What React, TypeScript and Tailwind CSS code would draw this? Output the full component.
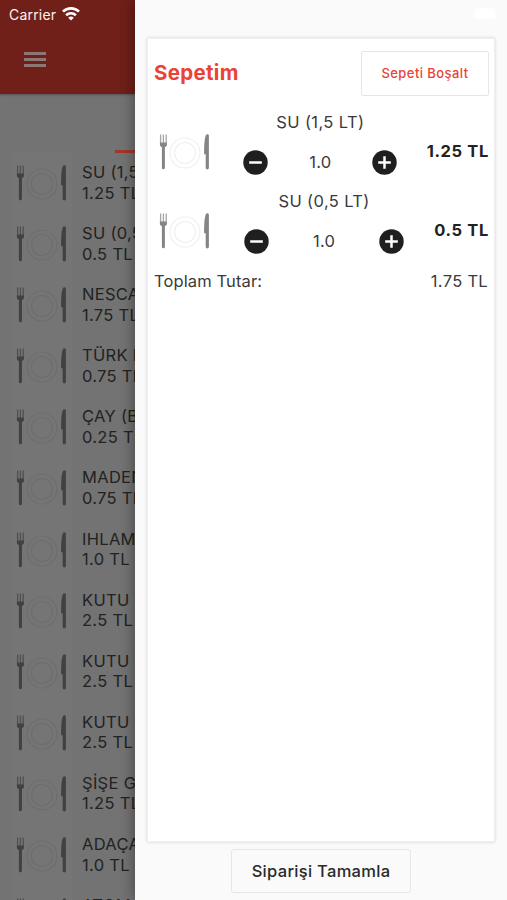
interface Product {
  name: string;
  price: string;
}

interface CartLine {
  name: string;
  quantity: string;
  price: string;
  controls: string;
  details: string;
}

const products: Product[] = [
  { name: 'SU (1,5 LT)', price: '1.25 TL' },
  { name: 'SU (0,5 LT)', price: '0.5 TL' },
  { name: 'NESCAFE', price: '1.75 TL' },
  { name: 'TÜRK KAHVESİ', price: '0.75 TL' },
  { name: 'ÇAY (BARDAK)', price: '0.25 TL' },
  { name: 'MADEN SUYU', price: '0.75 TL' },
  { name: 'IHLAMUR', price: '1.0 TL' },
  { name: 'KUTU KOLA', price: '2.5 TL' },
  { name: 'KUTU FANTA', price: '2.5 TL' },
  { name: 'KUTU SPRITE', price: '2.5 TL' },
  { name: 'ŞİŞE GAZOZ', price: '1.25 TL' },
  { name: 'ADAÇAYI', price: '1.0 TL' },
  { name: 'ATOM', price: '2.5 TL' },
];

const cart: CartLine[] = [
  { name: 'SU (1,5 LT)', quantity: '1.0', price: '1.25 TL', controls: 'w-[154px]', details: 'w-[209px]' },
  { name: 'SU (0,5 LT)', quantity: '1.0', price: '0.5 TL', controls: 'w-[160px]', details: 'w-[218px]' },
];

function PlateImage({ dimmed = false }: { dimmed?: boolean }) {
  const metal = dimmed ? '#414141' : '#858585';
  const tines = dimmed ? '#505050' : '#a5a5a5';
  const ring = dimmed ? '#6e6e6e' : '#f0f0f0';

  return (
    <svg viewBox="0 0 60 60" className="size-[60px] shrink-0" fill="none">
      <path d="M5.6 11.5v9M8.4 11.5v9M11.2 11.5v9" stroke={tines} strokeWidth="1.3" />
      <path d="M4.9 19.5h7v2.2c0 1.3-1 2.1-2 2.4v20.7a1.5 1.5 0 0 1-3 0V24.1c-1-.3-2-1.1-2-2.4z" fill={metal} />
      <circle cx="30" cy="30" r="15" stroke={ring} strokeWidth="1.2" />
      <circle cx="30" cy="30" r="10.5" stroke={ring} strokeWidth="1.2" />
      <path d="M53.9 13v31.8a1.6 1.6 0 0 1-3.2 0V31.3h-1.6c0-7 .2-14.5 1.4-18 .6-2.6 3.4-2.6 3.4-.3z" fill={metal} />
    </svg>
  );
}

function RoundButton({ type }: { type: 'minus' | 'plus' }) {
  return (
    <button className="size-[25px]">
      <svg viewBox="0 0 25 25" className="size-[25px]">
        <circle cx="12.5" cy="12.5" r="12.2" fill="#1f1f1f" />
        <path d={type === 'plus' ? 'M6.2 12.5h12.6M12.5 6.2v12.6' : 'M6.2 12.5h12.6'} stroke="#fff" strokeWidth="2.5" />
      </svg>
    </button>
  );
}

function WifiIcon() {
  return (
    <svg viewBox="0 0 18 14" className="h-[14px] w-[18px]" fill="none" stroke="#fff" strokeWidth="2.6">
      <path d="M1 4.7a11.3 11.3 0 0 1 16 0" />
      <path d="M4.1 8.2a7 7 0 0 1 9.8 0" />
      <path d="M9 13.6 6.2 10.8a4 4 0 0 1 5.6 0z" fill="#fff" stroke="none" />
    </svg>
  );
}

function Menu() {
  return (
    <div className="w-[135px] shrink-0 overflow-hidden bg-[#737373]">
      <header className="h-[94px] bg-[#701f19] pl-[9px] pt-[4px] shadow-[0_1px_2px_#555]">
        <div className="flex h-5 items-center gap-[6px]">
          <span className="text-[14px] tracking-[0.2px] text-[#fff3ef]">Carrier</span>
          <WifiIcon />
        </div>
        <div className="ml-[15px] mt-[28px] flex w-[22px] flex-col gap-[3px]">
          <span className="h-[3px] bg-[#8b7774]" />
          <span className="h-[3px] bg-[#8b7774]" />
          <span className="h-[3px] bg-[#8b7774]" />
        </div>
      </header>
      <div className="flex h-[59px] items-end justify-end">
        <span className="h-[3px] w-[20px] bg-[#a5352c]" />
      </div>
      <div className="ml-3 w-[300px]">
        {products.map((product) => (
          <div key={product.name} className="flex h-[61.1px] gap-[10px]">
            <div className="h-full bg-[#757575] pt-px">
              <PlateImage dimmed />
            </div>
            <div className="pt-[9px] text-[16.5px] leading-[20.5px] tracking-[0.3px] text-[#222]">
              <p>{product.name}</p>
              <p>{product.price}</p>
            </div>
          </div>
        ))}
      </div>
    </div>
  );
}

function CartRow({ line }: { line: CartLine }) {
  return (
    <div className="flex h-[79px] justify-between">
      <div className="-mr-px ml-px pt-[12px]">
        <PlateImage />
      </div>
      <div className={`flex flex-col items-center ${line.details}`}>
        <p className="mt-[1px] h-[21px] leading-[21px] tracking-[0.38px]">{line.name}</p>
        <div className={`mt-[17px] flex h-[25px] items-center justify-between ${line.controls}`}>
          <RoundButton type="minus" />
          <span>{line.quantity}</span>
          <RoundButton type="plus" />
        </div>
      </div>
      <p className="-mr-px pt-[28px] font-bold leading-[24px] tracking-[0.65px] text-[#222]">{line.price}</p>
    </div>
  );
}

export default function App() {
  return (
    <div className="flex h-[900px] w-[507px] overflow-hidden bg-[#737373] font-['Inter',sans-serif]">
      <Menu />
      <aside className="relative flex flex-1 flex-col items-center bg-[#fafafa] shadow-[0_0_14px_rgba(0,0,0,0.45)]">
        <span className="absolute right-[11px] top-[8px] h-[11px] w-[22px] rounded-[4px] bg-white blur-[1px]" />
        <section className="mt-[38px] h-[804px] w-[348px] border border-[#f0f0f0] bg-white pl-[6px] pr-[6px] text-[16.5px] tracking-[0.3px] text-[#3a3a3a] shadow-[0_0_3px_rgba(0,0,0,0.16)]">
          <div className="flex h-[72px] items-start justify-between pt-[12px]">
            <h1 className="pt-[8px] text-[20.5px] font-bold leading-[28px] tracking-[0.3px] text-[#ea4236]">Sepetim</h1>
            <button className="-mr-px h-[45px] w-[128px] rounded-[2px] border border-[#e6e6e6] text-[13px] font-medium tracking-[0.42px] text-[#ea4236]">
              Sepeti Boşalt
            </button>
          </div>
          {cart.map((line) => (
            <CartRow key={line.name} line={line} />
          ))}
          <div className="flex justify-between leading-[24px]">
            <span className="tracking-[0.12px]">Toplam Tutar:</span>
            <span>1.75 TL</span>
          </div>
        </section>
        <button className="mt-[7px] h-[44px] w-[180px] rounded-[3px] border border-[#e6e6e6] text-[16.5px] font-medium tracking-[0.3px] text-[#292929]">
          Siparişi Tamamla
        </button>
      </aside>
    </div>
  );
}
